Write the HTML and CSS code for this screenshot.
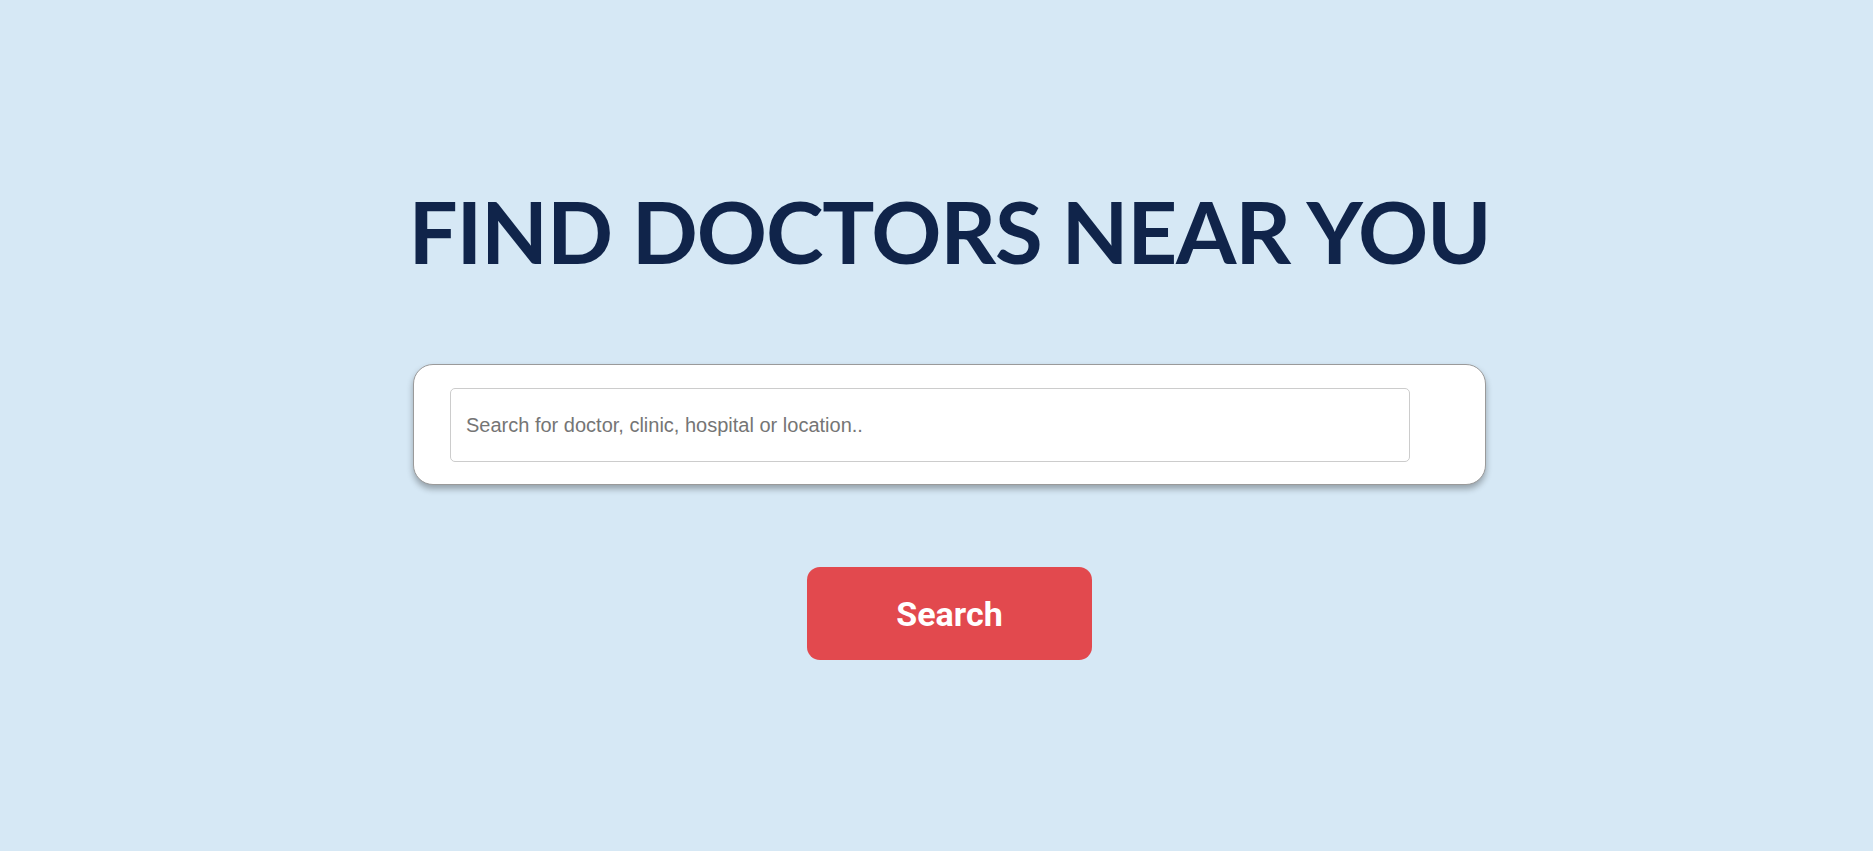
FILE: index.html
```html
<!DOCTYPE html>
<html lang="en">
<head>
<meta charset="utf-8">
<title>Find Doctors Near You</title>
<link rel="stylesheet" href="styles.css">
</head>
<body>
<main class="page">
  <h1 class="title">FIND DOCTORS NEAR YOU</h1>
  <div class="search-card">
    <input class="search-input" type="text" placeholder="Search for doctor, clinic, hospital or location..">
  </div>
  <button class="search-btn" type="button">Search</button>
</main>
</body>
</html>
```
FILE: styles.css
```css
html, body {
  margin: 0;
  padding: 0;
  background: #d6e8f5;
  height: 100%;
}
.page {
  display: flex;
  flex-direction: column;
  align-items: center;
  padding-left: 26px;
  padding-top: 179px;
  box-sizing: border-box;
}
.title {
  margin: 0;
  font-family: "Lato", "Liberation Sans", sans-serif;
  font-weight: 700;
  font-size: 87px;
  line-height: 104px;
  letter-spacing: -1.2px;
  color: #10244a;
}
.search-card {
  margin-top: 81px;
  width: 1073px;
  box-sizing: border-box;
  padding: 23px 76px 22px 36px;
  background: #fff;
  border: 1px solid #9a9a9a;
  border-radius: 20px;
  box-shadow: 0 4px 6px rgba(0, 0, 0, 0.3);
}
.search-input {
  display: block;
  width: 960px;
  height: 74px;
  box-sizing: border-box;
  padding: 0 15px;
  border: 1px solid #cccccc;
  border-radius: 5px;
  font-family: "Liberation Sans", Arial, sans-serif;
  font-size: 20px;
  color: #333;
  outline: none;
}
.search-input::placeholder {
  color: #757575;
}
.search-btn {
  margin-top: 82px;
  width: 285px;
  height: 93px;
  border: none;
  border-radius: 13px;
  background: #e2494e;
  color: #fff;
  font-family: "Roboto", "Liberation Sans", sans-serif;
  font-weight: 700;
  font-size: 34px;
  cursor: pointer;
}
```
